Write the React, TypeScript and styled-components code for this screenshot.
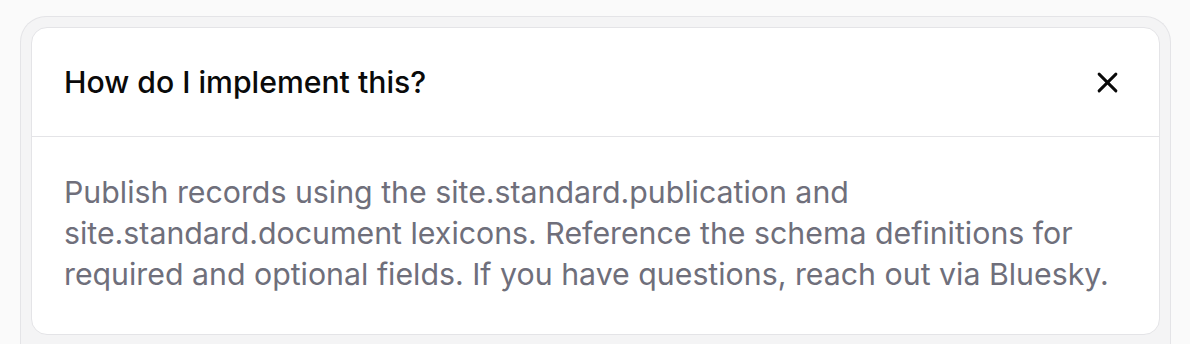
import * as React from "react";
import styled, { createGlobalStyle } from "styled-components";

const GlobalStyle = createGlobalStyle`
  html, body {
    margin: 0;
    padding: 0;
    background: #fafafa;
    font-family: Inter, "Noto Sans", sans-serif;
  }
`;

const Page = styled.div`
  padding: 16px 19px 0 20px;
`;

const Shell = styled.div`
  background: #f4f4f5;
  border: 1px solid #e4e4e7;
  border-bottom: none;
  border-radius: 26px 26px 0 0;
  padding: 10px 10px 20px;
`;

const Card = styled.section`
  background: #ffffff;
  border: 1px solid #e4e4e7;
  border-radius: 16px;
  overflow: hidden;
`;

const CardHeader = styled.header`
  display: flex;
  align-items: center;
  justify-content: space-between;
  padding: 32px;
  border-bottom: 1px solid #e4e4e7;
`;

const Title = styled.h2`
  margin: 0;
  font-size: 30.2px;
  line-height: 44px;
  font-weight: 500;
  color: #0a0a0a;
`;

const CloseButton = styled.button`
  display: flex;
  align-items: center;
  justify-content: center;
  width: 40px;
  height: 40px;
  padding: 0;
  border: none;
  background: transparent;
  color: #0a0a0a;
  cursor: pointer;
`;

const CardBody = styled.div`
  padding: 35px 32px 39px;
`;

const Text = styled.p`
  margin: 0;
  font-size: 30.3px;
  line-height: 41px;
  color: #6f6f7b;
`;

const App = () => {
  const [open, setOpen] = React.useState<boolean>(true);

  return (
    <Page>
      <GlobalStyle />
      <Shell>
        <Card>
          <CardHeader>
            <Title>How do I implement this?</Title>
            <CloseButton aria-label="Close" onClick={() => setOpen(!open)}>
              <svg width="21" height="21" viewBox="0 0 20 20" fill="none">
                <path d="M2 2L18 18M18 2L2 18" stroke="currentColor" strokeWidth="2.8" strokeLinecap="round" />
              </svg>
            </CloseButton>
          </CardHeader>
          <CardBody>
            <Text>
              Publish records using the site.standard.publication and
              site.standard.document lexicons. Reference the schema definitions for
              required and optional fields. If you have questions, reach out via Bluesky.
            </Text>
          </CardBody>
        </Card>
      </Shell>
    </Page>
  );
};

export default App;
